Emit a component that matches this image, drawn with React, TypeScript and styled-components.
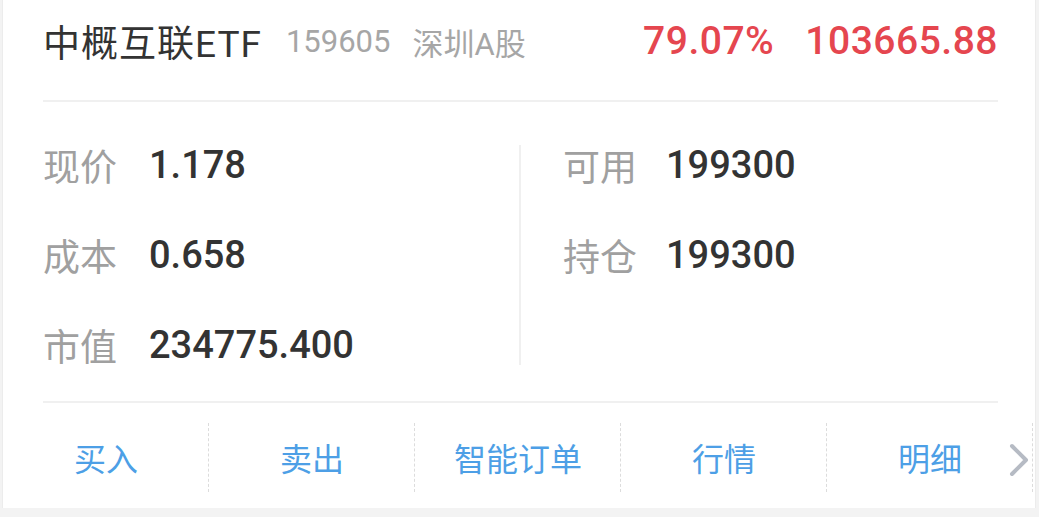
import React, { ReactElement } from 'react'
import styled, { createGlobalStyle } from 'styled-components'

const GlobalStyle = createGlobalStyle`
  html, body {
    margin: 0;
    padding: 0;
    background: #f3f3f3;
  }
  body {
    font-family: Roboto, "Noto Sans CJK SC", "Noto Sans", sans-serif;
  }
`

const Card = styled.div`
  box-sizing: border-box;
  position: relative;
  margin-left: 2px;
  width: 1034px;
  height: 508px;
  background: #fff;
  border-left: 1px solid #ececec;
  border-right: 1px solid #ececec;
  overflow: hidden;
`

const Body = styled.div`
  padding: 0 37px 0 40px;
`

const Header = styled.div`
  box-sizing: border-box;
  display: flex;
  align-items: center;
  height: 102px;
  padding-bottom: 18px;
  border-bottom: 2px solid #f0f0f0;
`

const Title = styled.span`
  font-size: 37px;
  font-weight: 400;
  letter-spacing: 1px;
  color: #333;
  margin-right: 24px;
`

const SubInfo = styled.span`
  font-size: 31px;
  color: #a6a6a6;
  margin-right: 22px;
`

const Profit = styled.div`
  margin-left: auto;
  display: flex;
  gap: 31px;
  font-size: 39px;
  font-weight: 500;
  letter-spacing: 0.5px;
  color: #e5464f;
`

const Info = styled.div`
  box-sizing: border-box;
  display: grid;
  grid-template-columns: 476px 1fr;
  padding: 43px 0 36px;
  border-bottom: 2px solid #f0f0f0;
`

const Column = styled.div<{ $divided?: boolean }>`
  display: flex;
  flex-direction: column;
  gap: 50px;
  padding-left: ${p => (p.$divided ? '42px' : '0')};
  border-left: ${p => (p.$divided ? '2px solid #f0f0f0' : 'none')};
`

const Row = styled.div`
  display: flex;
  align-items: center;
  height: 40px;
`

const Label = styled.span<{ $gap: number }>`
  font-size: 37px;
  color: #a0a0a0;
  margin-right: ${p => p.$gap}px;
`

const Value = styled.span`
  font-size: 38px;
  font-weight: 500;
  color: #333;
`

const Actions = styled.div`
  box-sizing: border-box;
  display: flex;
  height: 103px;
  padding-top: 4px;
`

const Action = styled.div`
  position: relative;
  flex: 0 0 206px;
  display: flex;
  align-items: center;
  justify-content: center;
  font-size: 32px;
  color: #4d9fe6;

  &::after {
    content: '';
    position: absolute;
    right: 0;
    top: 16px;
    bottom: 14px;
    border-right: 1px dashed #dcdcdc;
  }
`

const More = styled.div`
  position: absolute;
  right: 4px;
  bottom: 30px;
  width: 24px;
  height: 36px;
  display: flex;
  align-items: center;
  justify-content: center;
  background: #fff;
`

const leftRows = [
  { label: '现价', value: '1.178' },
  { label: '成本', value: '0.658' },
  { label: '市值', value: '234775.400' },
]

const rightRows = [
  { label: '可用', value: '199300' },
  { label: '持仓', value: '199300' },
]

const actions = ['买入', '卖出', '智能订单', '行情', '明细']

const App = (): ReactElement => (
  <>
    <GlobalStyle />
    <Card>
      <Body>
        <Header>
          <Title>中概互联ETF</Title>
          <SubInfo>159605</SubInfo>
          <SubInfo>深圳A股</SubInfo>
          <Profit>
            <span>79.07%</span>
            <span>103665.88</span>
          </Profit>
        </Header>
        <Info>
          <Column>
            {leftRows.map(r => (
              <Row key={r.label}>
                <Label $gap={32}>{r.label}</Label>
                <Value>{r.value}</Value>
              </Row>
            ))}
          </Column>
          <Column $divided>
            {rightRows.map(r => (
              <Row key={r.label}>
                <Label $gap={29}>{r.label}</Label>
                <Value>{r.value}</Value>
              </Row>
            ))}
          </Column>
        </Info>
      </Body>
      <Actions>
        {actions.map(a => (
          <Action key={a}>{a}</Action>
        ))}
      </Actions>
      <More>
        <svg width='20' height='34' viewBox='0 0 20 34'>
          <path d='M3 3 L17 17 L3 31' fill='none' stroke='#b6bbc4' strokeWidth='4' strokeLinecap='round' strokeLinejoin='round' />
        </svg>
      </More>
    </Card>
  </>
)

export default App
